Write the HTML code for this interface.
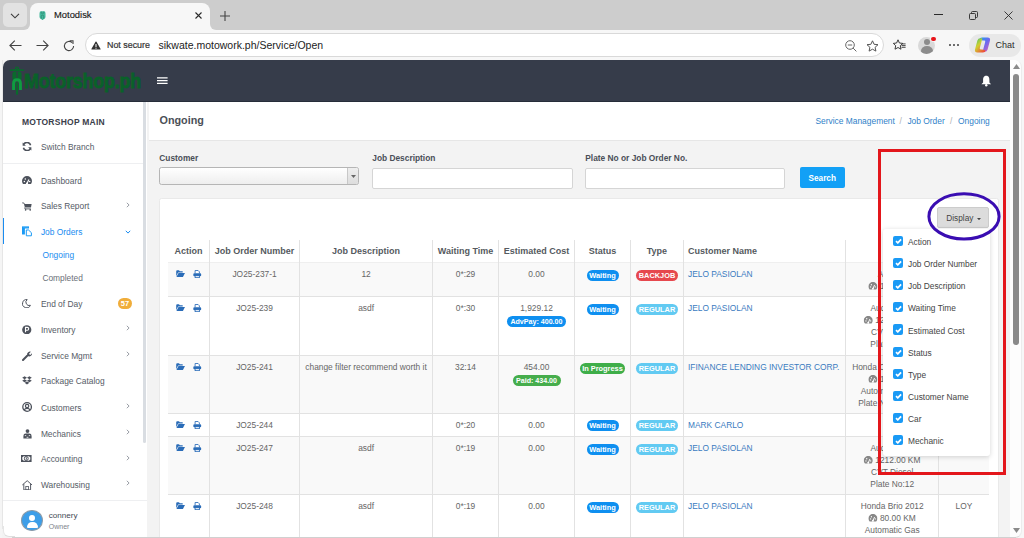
<!DOCTYPE html>
<html><head><meta charset="utf-8">
<style>
*{box-sizing:border-box;margin:0;padding:0}
html,body{width:1024px;height:538px;overflow:hidden;background:#cdcdcd;font-family:"Liberation Sans",sans-serif;position:relative}
.a{position:absolute}
#tabbar{left:0;top:0;width:1024px;height:30px;background:#cdcdcd}
#toolbar{left:0;top:30px;width:1024px;height:30px;background:#f7f7f7}
.t{position:absolute;white-space:nowrap;line-height:1}
.car{display:inline-block;width:8px;height:7px;vertical-align:-0.5px;background:radial-gradient(circle at 50% 100%,#666 0 4px,transparent 4.2px)}
</style></head>
<body>
<div id="tabbar" class="a">
  <div class="a" style="left:22px;top:22px;width:196px;height:8px;background:#f7f7f7"></div>
  <div class="a" style="left:20px;top:20px;width:10px;height:10px;background:#cdcdcd;border-bottom-right-radius:6px"></div>
  <div class="a" style="left:210px;top:20px;width:10px;height:10px;background:#cdcdcd;border-bottom-left-radius:6px"></div>
  <div class="a" style="left:3px;top:3px;width:24px;height:24px;background:#e2e2e2;border-radius:5px"></div>
  <svg class="a" style="left:10px;top:12.5px" width="10" height="6" viewBox="0 0 10 6"><path d="M1 0.8 L5 4.8 L9 0.8" stroke="#3a3a3a" stroke-width="1.1" fill="none"/></svg>
  <div class="a" style="left:30px;top:3px;width:180px;height:30px;background:#f7f7f7;border-radius:8px 8px 0 0"></div>
  <svg class="a" style="left:38.5px;top:10.5px" width="7" height="9.5" viewBox="0 0 7 9.5"><path d="M0.5 2.5 Q0.5 0.3 2 0.3 H5 Q6.5 0.3 6.5 2.5 V6 Q6.5 8 4.3 8.2 V9.3 H2.7 V8.2 Q0.5 8 0.5 6Z" fill="#45b89c"/><path d="M2.2 0.6 V2.2 H4.8 V0.6" stroke="#2e8a72" stroke-width="0.7" fill="none"/><path d="M2.3 7.6 V5.3 A1.2 1.2 0 0 1 4.7 5.3 V7.6" stroke="#2e8a72" stroke-width="0.8" fill="none"/></svg>
  <div class="t" style="left:54px;top:10.4px;font-size:9.4px;color:#1a1a1a;-webkit-text-stroke:0.15px #1a1a1a">Motodisk</div>
  <svg class="a" style="left:195px;top:12.3px" width="7" height="7" viewBox="0 0 7 7"><path d="M0.5 0.5 L6.5 6.5 M6.5 0.5 L0.5 6.5" stroke="#2a2a2a" stroke-width="1.1"/></svg>
  <svg class="a" style="left:220px;top:10.5px" width="10" height="10" viewBox="0 0 10 10"><path d="M5 0 V10 M0 5 H10" stroke="#444" stroke-width="1.1"/></svg>
  <div class="a" style="left:934px;top:14px;width:8.5px;height:1px;background:#2a2a2a"></div>
  <svg class="a" style="left:968.5px;top:10.5px" width="9" height="9" viewBox="0 0 9 9"><rect x="0.5" y="2.5" width="6" height="6" rx="1" fill="none" stroke="#2a2a2a" stroke-width="0.9"/><path d="M2.5 2.5 V1.5 a1 1 0 0 1 1 -1 H7.5 a1 1 0 0 1 1 1 V5.5 a1 1 0 0 1 -1 1 H6.5" fill="none" stroke="#2a2a2a" stroke-width="0.9"/></svg>
  <svg class="a" style="left:1003.5px;top:10.5px" width="9" height="9" viewBox="0 0 9 9"><path d="M0.5 0.5 L8.5 8.5 M8.5 0.5 L0.5 8.5" stroke="#2a2a2a" stroke-width="0.9"/></svg>
</div>
<div id="toolbar" class="a">
  <svg class="a" style="left:8.5px;top:10px" width="13" height="11" viewBox="0 0 13 11"><path d="M12.5 5.5 H1 M5.8 0.6 L0.9 5.5 L5.8 10.4" stroke="#444" stroke-width="1.1" fill="none"/></svg>
  <svg class="a" style="left:35.5px;top:10px" width="13" height="11" viewBox="0 0 13 11"><path d="M0.5 5.5 H12 M7.2 0.6 L12.1 5.5 L7.2 10.4" stroke="#444" stroke-width="1.1" fill="none"/></svg>
  <svg class="a" style="left:63px;top:9.5px" width="12" height="12" viewBox="0 0 12 12"><path d="M10.6 6 A4.6 4.6 0 1 1 9.2 2.7" stroke="#444" stroke-width="1.1" fill="none"/><path d="M6.8 0.8 H10 V4" stroke="#444" stroke-width="1.1" fill="none"/></svg>
  <div class="a" style="left:84.6px;top:3px;width:799.4px;height:23.5px;background:#fff;border:1px solid #d9d9d9;border-radius:12px"></div>
  <svg class="a" style="left:91px;top:11px" width="10" height="9" viewBox="0 0 10 9"><path d="M5 0.4 Q5.3 0.4 5.5 0.8 L9.6 8 Q9.8 8.6 9.2 8.6 H0.8 Q0.2 8.6 0.4 8 L4.5 0.8 Q4.7 0.4 5 0.4Z" fill="#333"/><rect x="4.5" y="3" width="1" height="3" fill="#fff"/><rect x="4.5" y="6.7" width="1" height="1" fill="#fff"/></svg>
  <div class="t" style="left:107px;top:10.6px;font-size:8.9px;color:#333;-webkit-text-stroke:0.2px #333">Not secure</div>
  <div class="t" style="left:158.5px;top:10px;font-size:10.5px;color:#222">sikwate.motowork.ph/Service/Open</div>
  <svg class="a" style="left:845px;top:10px" width="12" height="12" viewBox="0 0 12 12"><circle cx="5" cy="5" r="4.3" stroke="#666" stroke-width="1" fill="none"/><path d="M2.8 5 H7.2 M8.1 8.1 L11.4 11.4" stroke="#666" stroke-width="1"/></svg>
  <svg class="a" style="left:866px;top:9.5px" width="13" height="12" viewBox="0 0 13 12"><path d="M6.5 0.8 L8.1 4.3 L12 4.7 L9.1 7.3 L9.9 11.1 L6.5 9.2 L3.1 11.1 L3.9 7.3 L1 4.7 L4.9 4.3 Z" stroke="#555" stroke-width="1" fill="none" stroke-linejoin="round"/></svg>
  <svg class="a" style="left:893px;top:9px" width="13" height="12" viewBox="0 0 13 12"><path d="M5 0.8 L6.4 4 L9.8 4.4 L7.3 6.7 L8 10.2 L5 8.5 L2 10.2 L2.7 6.7 L0.3 4.4 L3.6 4 Z" stroke="#333" stroke-width="0.95" fill="#f7f7f7" stroke-linejoin="round"/><path d="M8.6 6.6 H12.6 M8.6 8.3 H12.6 M9 4.9 H12.6" stroke="#333" stroke-width="0.9"/></svg>
  <div class="a" style="left:918px;top:6.6px;width:17.2px;height:17.2px;border-radius:50%;background:#d9d9d9;overflow:hidden">
    <div class="a" style="left:5.6px;top:2.3px;width:6px;height:6px;border-radius:50%;background:#8c8c8c"></div>
    <div class="a" style="left:2.6px;top:9.8px;width:12px;height:10px;border-radius:50%;background:#8c8c8c"></div>
  </div>
  <div class="a" style="left:931px;top:6.5px;width:4.8px;height:4.8px;border-radius:50%;background:#e8141a;box-shadow:0 0 0 0.8px #f7f7f7"></div>
  <svg class="a" style="left:948.5px;top:14px" width="10" height="2" viewBox="0 0 10 2"><circle cx="1" cy="1" r="0.95" fill="#333"/><circle cx="5" cy="1" r="0.95" fill="#333"/><circle cx="9" cy="1" r="0.95" fill="#333"/></svg>
  <div class="a" style="left:969px;top:4px;width:52px;height:22.6px;background:#e8e8e8;border-radius:11.3px"></div>
  <svg class="a" style="left:973.5px;top:7.2px" width="17" height="16" viewBox="0 0 17 16"><defs><linearGradient id="g1" x1="0" y1="0" x2="1" y2="1"><stop offset="0" stop-color="#1aa0f0"/><stop offset="0.5" stop-color="#6a6af0"/><stop offset="1" stop-color="#e860b0"/></linearGradient><linearGradient id="g2" x1="0" y1="0" x2="0.8" y2="1"><stop offset="0" stop-color="#30c070"/><stop offset="0.45" stop-color="#d0d030"/><stop offset="1" stop-color="#f04a3a"/></linearGradient></defs><path d="M5.2 2.6 Q5.8 0.6 8 0.6 H13.6 Q16.6 0.6 16 3.6 L13.6 12.4 Q13 14.8 10.6 14.8 H8.6 L11.2 5 Q11.6 3.6 10.2 3.6 H8.6Z" fill="url(#g1)"/><path d="M11.8 13.4 Q11.2 15.4 9 15.4 H3.4 Q0.4 15.4 1 12.4 L3.4 3.6 Q4 1.2 6.4 1.2 H8.4 L5.8 11 Q5.4 12.4 6.8 12.4 H8.4Z" fill="url(#g2)"/></svg>
  <div class="t" style="left:995.6px;top:10.6px;font-size:9px;color:#2a2a2a">Chat</div>
</div>

<div class="a" style="left:3px;top:60px;width:1007px;height:478px;background:#f3f3f3"></div>
<div class="a" style="left:3px;top:60px;width:1007.5px;height:42px;background:#363c4a;border-top-left-radius:7px;border-bottom:1px solid #262d39"></div>
<svg class="a" style="left:6px;top:64px" width="22" height="32" viewBox="0 0 22 32"><path d="M3.8 6.2 Q11 4.6 18.2 6.2 Q11 7.4 3.8 6.2Z" fill="#0a6a2c" stroke="#0a6a2c" stroke-width="1"/><circle cx="11" cy="4.6" r="1.5" fill="none" stroke="#0a6a2c" stroke-width="1.1"/><path d="M6.4 15.5 V10 Q6.4 7.6 8.8 7.6 H10.4 V15.5Z" fill="#0a6a2c"/><path d="M15.6 15.5 V10 Q15.6 7.6 13.2 7.6 H11.6 V15.5Z" fill="#0a6a2c"/><path d="M7.6 26 V19.5 Q7.6 15.8 11 15.8 Q14.4 15.8 14.4 19.5 V26" fill="none" stroke="#0e9c40" stroke-width="3"/><path d="M11 19 V29.8" stroke="#0a6a2c" stroke-width="2.2" stroke-linecap="round"/></svg>
<div class="t" style="left:23.7px;top:71px;font-size:20px;font-weight:bold;color:#0a6129;-webkit-text-stroke:0.8px #0a6129;transform:scaleX(0.893);transform-origin:left top;letter-spacing:-0.2px">Motorshop.ph</div>
<svg class="a" style="left:157.1px;top:77px" width="10.6" height="8" viewBox="0 0 10.6 8"><path d="M0 0.9 H10.6 M0 3.65 H10.6 M0 6.4 H10.6" stroke="#fff" stroke-width="1.2"/></svg>
<svg class="a" style="left:981px;top:75px" width="10.5" height="11.5" viewBox="0 0 10.5 11.5"><path d="M5.25 0.8 C2.6 0.8 2.1 3 2.1 5.2 V7.4 L0.4 9.3 H10.1 L8.4 7.4 V5.2 C8.4 3 7.9 0.8 5.25 0.8Z" fill="#fff"/><circle cx="5.25" cy="10.2" r="1.2" fill="#fff"/></svg>
<div class="a" style="left:3px;top:101.5px;width:144px;height:437px;background:#fff"></div>
<div class="a" style="left:143.2px;top:101.5px;width:3px;height:341.5px;background:#d9dde2;border-radius:0 0 1.5px 1.5px"></div>
<div class="t" style="left:22px;top:118.4px;font-size:8.5px;font-weight:bold;color:#3b404b;letter-spacing:0.25px">MOTORSHOP MAIN</div>
<div class="a" style="left:3px;top:163px;width:140px;height:1px;background:#eeeff1"></div>
<div class="a" style="left:3px;top:499.6px;width:144px;height:1px;background:#eeeff1"></div>
<div class="t" style="left:40.9px;top:142.72px;font-size:8.4px;color:#555b66">Switch Branch</div>
<div class="t" style="left:40.9px;top:176.72px;font-size:8.4px;color:#555b66">Dashboard</div>
<div class="t" style="left:40.9px;top:202.42px;font-size:8.4px;color:#555b66">Sales Report</div>
<div class="t" style="left:40.9px;top:227.72px;font-size:8.4px;color:#1a8cf0">Job Orders</div>
<div class="t" style="left:40.9px;top:299.52px;font-size:8.4px;color:#555b66">End of Day</div>
<div class="t" style="left:40.9px;top:325.52px;font-size:8.4px;color:#555b66">Inventory</div>
<div class="t" style="left:40.9px;top:351.72px;font-size:8.4px;color:#555b66">Service Mgmt</div>
<div class="t" style="left:40.9px;top:377.32px;font-size:8.4px;color:#555b66">Package Catalog</div>
<div class="t" style="left:40.9px;top:403.82px;font-size:8.4px;color:#555b66">Customers</div>
<div class="t" style="left:40.9px;top:429.52px;font-size:8.4px;color:#555b66">Mechanics</div>
<div class="t" style="left:40.9px;top:455.32px;font-size:8.4px;color:#555b66">Accounting</div>
<div class="t" style="left:40.9px;top:481.12px;font-size:8.4px;color:#555b66">Warehousing</div>
<div class="t" style="left:42.4px;top:251.32px;font-size:8.4px;color:#1a8cf0">Ongoing</div>
<div class="t" style="left:42.4px;top:273.92px;font-size:8.4px;color:#6a6f78">Completed</div>
<div class="a" style="left:2.8px;top:218.3px;width:1.2px;height:26.2px;background:#1a8cf0"></div>
<svg class="a" style="left:125.5px;top:201.5px" width="4" height="6" viewBox="0 0 4 6"><path d="M0.8 0.8 L3.1 3 L0.8 5.2" stroke="#9a9ea6" stroke-width="1" fill="none"/></svg>
<svg class="a" style="left:125.5px;top:324.8px" width="4" height="6" viewBox="0 0 4 6"><path d="M0.8 0.8 L3.1 3 L0.8 5.2" stroke="#9a9ea6" stroke-width="1" fill="none"/></svg>
<svg class="a" style="left:125.5px;top:351.0px" width="4" height="6" viewBox="0 0 4 6"><path d="M0.8 0.8 L3.1 3 L0.8 5.2" stroke="#9a9ea6" stroke-width="1" fill="none"/></svg>
<svg class="a" style="left:125.5px;top:403.0px" width="4" height="6" viewBox="0 0 4 6"><path d="M0.8 0.8 L3.1 3 L0.8 5.2" stroke="#9a9ea6" stroke-width="1" fill="none"/></svg>
<svg class="a" style="left:125.5px;top:428.8px" width="4" height="6" viewBox="0 0 4 6"><path d="M0.8 0.8 L3.1 3 L0.8 5.2" stroke="#9a9ea6" stroke-width="1" fill="none"/></svg>
<svg class="a" style="left:125.5px;top:454.6px" width="4" height="6" viewBox="0 0 4 6"><path d="M0.8 0.8 L3.1 3 L0.8 5.2" stroke="#9a9ea6" stroke-width="1" fill="none"/></svg>
<svg class="a" style="left:125.5px;top:480.4px" width="4" height="6" viewBox="0 0 4 6"><path d="M0.8 0.8 L3.1 3 L0.8 5.2" stroke="#9a9ea6" stroke-width="1" fill="none"/></svg>
<svg class="a" style="left:124.5px;top:229.8px" width="6" height="4" viewBox="0 0 6 4"><path d="M0.8 0.8 L3 3.1 L5.2 0.8" stroke="#1a8cf0" stroke-width="1" fill="none"/></svg>
<div class="a" style="left:117.7px;top:298.2px;width:14.7px;height:11px;border-radius:6px;background:#f0ad3a;color:#fff;font-size:7.5px;font-weight:bold;line-height:11px;text-align:center">57</div>
<svg class="a" style="left:22px;top:142px" width="10" height="9" viewBox="0 0 10 9"><path d="M8.6 3.2 A3.8 3.8 0 0 0 1.6 2.4" stroke="#4d525c" stroke-width="1.5" fill="none"/><path d="M0.6 0.5 V3.8 H3.9Z" fill="#4d525c"/><path d="M1.4 5.8 A3.8 3.8 0 0 0 8.4 6.6" stroke="#4d525c" stroke-width="1.5" fill="none"/><path d="M9.4 8.5 V5.2 H6.1Z" fill="#4d525c"/></svg>
<svg class="a" style="left:22px;top:175.6px" width="10" height="8.5" viewBox="0 0 10 8.5"><path d="M1.3 8.4 A5 5 0 1 1 8.7 8.4 Z" fill="#4d525c"/><path d="M5 7.6 L6.9 3.4" stroke="#fff" stroke-width="1.1"/><circle cx="5" cy="7.6" r="1.1" fill="#fff"/><circle cx="2.4" cy="5.6" r="0.75" fill="#fff"/><circle cx="3.3" cy="3.1" r="0.75" fill="#fff"/><circle cx="7.7" cy="5.6" r="0.75" fill="#fff"/></svg>
<svg class="a" style="left:22px;top:201.5px" width="10" height="9" viewBox="0 0 10 9"><path d="M0.3 0.9 H1.6 L2.4 2" stroke="#4d525c" stroke-width="1" fill="none"/><path d="M2 2 H9.6 L9 5.6 H2.9Z" fill="#4d525c"/><path d="M2.6 5.6 L3 6.9 H8.8" stroke="#4d525c" stroke-width="0.9" fill="none"/><circle cx="3.6" cy="7.9" r="0.8" fill="#4d525c"/><circle cx="8.2" cy="7.9" r="0.8" fill="#4d525c"/></svg>
<svg class="a" style="left:21.5px;top:226px" width="11" height="11" viewBox="0 0 11 11"><rect x="0" y="0.3" width="7" height="8.3" rx="0.6" fill="#1a9af5"/><rect x="1" y="0.3" width="5" height="0.9" fill="#7cc8fa"/><path d="M3.5 3.2 H6.8 L10.2 6.4 V10.6 H3.5Z" fill="#fff" stroke="#fff" stroke-width="1.2"/><path d="M4.3 4 H6.5 L9.4 6.7 V9.8 H4.3Z" fill="#fff" stroke="#1a9af5" stroke-width="1"/></svg>
<svg class="a" style="left:22px;top:298.7px" width="9" height="9" viewBox="0 0 9 9"><path d="M5.2 0.6 A4.1 4.1 0 1 0 8.4 6.3 A3.3 3.3 0 0 1 5.2 0.6Z" stroke="#4d525c" stroke-width="1" fill="none"/></svg>
<svg class="a" style="left:22px;top:324.5px" width="9.5" height="9.5" viewBox="0 0 9.5 9.5"><circle cx="4.75" cy="4.75" r="4.6" fill="#4d525c"/><path d="M3.5 7.2 V2.4 H5.3 A1.4 1.4 0 0 1 5.3 5.2 H3.5" stroke="#fff" stroke-width="1.1" fill="none"/></svg>
<svg class="a" style="left:22px;top:350.5px" width="10" height="10" viewBox="0 0 10 10"><path d="M1 9 L5.2 4.8" stroke="#4d525c" stroke-width="2" stroke-linecap="round"/><path d="M5 3.6 A2.9 2.9 0 0 1 8.9 0.8 L7 2.7 L7.5 3.5 L8.3 4 L10 2.2 A2.9 2.9 0 0 1 6.3 5.3Z" fill="#4d525c"/></svg>
<svg class="a" style="left:22px;top:376px" width="10" height="9" viewBox="0 0 10 9"><path d="M2.6 0.3 L5 1.8 L2.6 3.3 L0.2 1.8Z M7.4 0.3 L9.8 1.8 L7.4 3.3 L5 1.8Z M2.6 3.3 L5 4.8 L2.6 6.3 L0.2 4.8Z M7.4 3.3 L9.8 4.8 L7.4 6.3 L5 4.8Z M2.6 6.8 L5 5.4 L7.4 6.8 L5 8.4Z" fill="#4d525c"/></svg>
<svg class="a" style="left:22px;top:402px" width="10.2" height="10" viewBox="0 0 10.2 10"><circle cx="5.1" cy="5" r="4.3" stroke="#4d525c" stroke-width="1.3" fill="none"/><circle cx="5.1" cy="4" r="1.7" stroke="#4d525c" stroke-width="1.2" fill="none"/><path d="M2.2 8.3 Q2.8 6.4 5.1 6.4 Q7.4 6.4 8 8.3" stroke="#4d525c" stroke-width="1.2" fill="none"/></svg>
<svg class="a" style="left:22.5px;top:428.6px" width="9" height="10" viewBox="0 0 9 10"><circle cx="4.5" cy="2.1" r="1.9" fill="#4d525c"/><path d="M0.4 9.6 V7 Q0.4 4.6 2.8 4.6 H6.2 Q8.6 4.6 8.6 7 V9.6Z" fill="#4d525c"/><path d="M1.8 6.6 H3.2 M5.8 6.6 H7.2 M3.6 8.3 H5.4" stroke="#fff" stroke-width="0.8"/></svg>
<svg class="a" style="left:21.3px;top:455.2px" width="10.6" height="7" viewBox="0 0 10.6 7"><rect x="0.65" y="0.65" width="9.3" height="5.7" stroke="#4d525c" stroke-width="1.3" fill="none"/><path d="M0.6 0.6 H2.6 Q2.6 2.4 0.6 2.4Z M10 0.6 H8 Q8 2.4 10 2.4Z M0.6 6.4 H2.6 Q2.6 4.6 0.6 4.6Z M10 6.4 H8 Q8 4.6 10 4.6Z" fill="#4d525c"/><ellipse cx="5.3" cy="3.5" rx="1.9" ry="2.1" stroke="#4d525c" stroke-width="1" fill="none"/><rect x="4.9" y="2.3" width="0.9" height="2.4" fill="#4d525c"/></svg>
<svg class="a" style="left:21.8px;top:479.8px" width="10.4" height="10.4" viewBox="0 0 10.4 10.4"><path d="M0.3 5 L5.2 0.7 L10.1 5" stroke="#4d525c" stroke-width="0.95" fill="none"/><path d="M1.8 3.9 V9.9 H8.6 V3.9" stroke="#4d525c" stroke-width="0.95" fill="none"/><rect x="3.8" y="6.4" width="2.8" height="3.5" stroke="#4d525c" stroke-width="0.8" fill="none"/></svg>
<div class="a" style="left:21.2px;top:510.3px;width:21.5px;height:21.2px;border-radius:50%;background:#3d9ee8;border:0.6px solid #8a9aa8;overflow:hidden"><div class="a" style="left:7.3px;top:4.2px;width:5.8px;height:5.8px;border-radius:50%;background:#fff"></div><div class="a" style="left:4.8px;top:10.6px;width:10.6px;height:5.8px;border-radius:5.3px 5.3px 1px 1px;background:#fff"></div></div>
<div class="t" style="left:48.8px;top:511.89px;font-size:8.1px;color:#444a55">connery</div>
<div class="t" style="left:48.8px;top:522.67px;font-size:7px;color:#80858c">Owner</div>
<div class="a" style="left:149px;top:101.5px;width:861px;height:39.5px;background:#fff;border-bottom:1px solid #e6e6e6"></div>
<div class="t" style="left:159.5px;top:114.8px;font-size:10.8px;font-weight:bold;color:#4b5057">Ongoing</div>
<div class="t" style="left:815.4px;top:117.3px;font-size:8.42px;color:#2f7fc8">Service Management</div>
<div class="t" style="left:899.5px;top:117.3px;font-size:8.42px;color:#b0b0b0">/</div>
<div class="t" style="left:907.4px;top:117.3px;font-size:8.42px;color:#2f7fc8">Job Order</div>
<div class="t" style="left:950px;top:117.3px;font-size:8.42px;color:#b0b0b0">/</div>
<div class="t" style="left:958px;top:117.3px;font-size:8.42px;color:#2f7fc8">Ongoing</div>
<div class="t" style="left:159.3px;top:154.4px;font-size:8.35px;font-weight:bold;color:#4a4f58">Customer</div>
<div class="t" style="left:372.3px;top:154.4px;font-size:8.35px;font-weight:bold;color:#4a4f58">Job Description</div>
<div class="t" style="left:585.3px;top:154.4px;font-size:8.35px;font-weight:bold;color:#4a4f58">Plate No or Job Order No.</div>
<div class="a" style="left:159.3px;top:167.3px;width:200.2px;height:17.9px;border:1px solid #b5b5b5;border-radius:2.5px;background:linear-gradient(#fff,#eee)"></div>
<div class="a" style="left:347.3px;top:168.3px;width:11.2px;height:15.9px;border-left:1px solid #c8c8c8;background:linear-gradient(#eee,#ddd);border-radius:0 2px 2px 0"></div>
<svg class="a" style="left:350.5px;top:174.5px" width="5" height="3" viewBox="0 0 5 3"><path d="M0 0 H5 L2.5 3Z" fill="#666"/></svg>
<div class="a" style="left:372.3px;top:167.5px;width:200.5px;height:21.2px;border:1px solid #d5d5d5;border-radius:2px;background:#fff"></div>
<div class="a" style="left:585.3px;top:167.5px;width:199.9px;height:21.2px;border:1px solid #d5d5d5;border-radius:2px;background:#fff"></div>
<div class="a" style="left:799.8px;top:167.4px;width:44.9px;height:20.8px;border-radius:2px;background:#12a0f6;color:#fff;font-size:8.2px;font-weight:bold;line-height:23px;text-align:center">Search</div>
<div class="a" style="left:159px;top:198px;width:839.5px;height:345px;background:#fff;border:1px solid #e9e9e9;border-radius:2.5px"></div>
<div class="a" style="left:167.6px;top:262.3px;width:821.4px;height:34.1px;background:#f9f9f9"></div>
<div class="a" style="left:167.6px;top:296.4px;width:821.4px;height:58.9px;background:#fff"></div>
<div class="a" style="left:167.6px;top:355.3px;width:821.4px;height:58.4px;background:#f9f9f9"></div>
<div class="a" style="left:167.6px;top:413.7px;width:821.4px;height:22.7px;background:#fff"></div>
<div class="a" style="left:167.6px;top:436.4px;width:821.4px;height:58.0px;background:#f9f9f9"></div>
<div class="a" style="left:167.6px;top:494.4px;width:821.4px;height:65.6px;background:#fff"></div>
<div class="a" style="left:167.6px;top:295.9px;width:821.4px;height:1px;background:#e2e2e2"></div>
<div class="a" style="left:167.6px;top:354.8px;width:821.4px;height:1px;background:#e2e2e2"></div>
<div class="a" style="left:167.6px;top:413.2px;width:821.4px;height:1px;background:#e2e2e2"></div>
<div class="a" style="left:167.6px;top:435.9px;width:821.4px;height:1px;background:#e2e2e2"></div>
<div class="a" style="left:167.6px;top:493.9px;width:821.4px;height:1px;background:#e2e2e2"></div>
<div class="a" style="left:167.6px;top:261.8px;width:821.4px;height:1px;background:#efefef"></div>
<div class="a" style="left:209.0px;top:240px;width:1px;height:300px;background:#e2e2e2"></div>
<div class="a" style="left:299.1px;top:240px;width:1px;height:300px;background:#e2e2e2"></div>
<div class="a" style="left:432.0px;top:240px;width:1px;height:300px;background:#e2e2e2"></div>
<div class="a" style="left:498.0px;top:240px;width:1px;height:300px;background:#e2e2e2"></div>
<div class="a" style="left:574.0px;top:240px;width:1px;height:300px;background:#e2e2e2"></div>
<div class="a" style="left:630.1px;top:240px;width:1px;height:300px;background:#e2e2e2"></div>
<div class="a" style="left:682.8px;top:240px;width:1px;height:300px;background:#e2e2e2"></div>
<div class="a" style="left:845.1px;top:240px;width:1px;height:300px;background:#e2e2e2"></div>
<div class="a" style="left:938.3px;top:240px;width:1px;height:300px;background:#e2e2e2"></div>
<div class="t" style="left:188.55px;top:246.89px;font-size:9px;color:#555a60;font-weight:bold;transform:translateX(-50%);">Action</div>
<div class="t" style="left:254.55px;top:246.89px;font-size:9px;color:#555a60;font-weight:bold;transform:translateX(-50%);">Job Order Number</div>
<div class="t" style="left:366.05px;top:246.89px;font-size:9px;color:#555a60;font-weight:bold;transform:translateX(-50%);">Job Description</div>
<div class="t" style="left:465.5px;top:246.89px;font-size:9px;color:#555a60;font-weight:bold;transform:translateX(-50%);">Waiting Time</div>
<div class="t" style="left:536.5px;top:246.89px;font-size:9px;color:#555a60;font-weight:bold;transform:translateX(-50%);">Estimated Cost</div>
<div class="t" style="left:602.55px;top:246.89px;font-size:9px;color:#555a60;font-weight:bold;transform:translateX(-50%);">Status</div>
<div class="t" style="left:656.95px;top:246.89px;font-size:9px;color:#555a60;font-weight:bold;transform:translateX(-50%);">Type</div>
<div class="t" style="left:688px;top:246.89px;font-size:9px;color:#555a60;font-weight:bold;">Customer Name</div>
<div class="t" style="left:892.2px;top:246.89px;font-size:9px;color:#555a60;font-weight:bold;transform:translateX(-50%);">Car</div>
<div class="t" style="left:963.9px;top:246.89px;font-size:9px;color:#555a60;font-weight:bold;transform:translateX(-50%);">Mechanic</div>
<svg class="a" style="left:176px;top:270.3px" width="9" height="7.2" viewBox="0 0 9 7.2"><path d="M0.2 1.3 Q0.2 0.3 1.2 0.3 H2.9 L3.9 1.3 H6.7 V2.5 H2.1 L0.2 6.2Z" fill="#2a6cb8"/><path d="M2.5 3 H9 L6.9 6.9 H0.4Z" fill="#2a6cb8"/></svg>
<svg class="a" style="left:193px;top:270.1px" width="8.5" height="8.2" viewBox="0 0 8.5 8.2"><path d="M2.1 3.4 V0.5 H5.1 L6.4 1.8 V3.4" stroke="#2a6cb8" stroke-width="0.85" fill="#fff"/><rect x="0.3" y="3.3" width="7.9" height="3" rx="1.1" fill="#2a6cb8"/><rect x="2.1" y="5.5" width="4.3" height="2.2" fill="#dde7f3" stroke="#2a6cb8" stroke-width="0.85"/></svg>
<div class="t" style="left:254.55px;top:270.22px;font-size:8.4px;color:#666;transform:translateX(-50%);">JO25-237-1</div>
<div class="t" style="left:366.05px;top:270.22px;font-size:8.4px;color:#666;transform:translateX(-50%);">12</div>
<div class="t" style="left:465.5px;top:270.22px;font-size:8.4px;color:#666;transform:translateX(-50%);">0*:29</div>
<div class="t" style="left:536.5px;top:270.22px;font-size:8.4px;color:#666;transform:translateX(-50%);">0.00</div>
<div class="a" style="left:586.5px;top:269.5px;width:32px;height:11.4px;border-radius:6px;background:#0e8ff0;color:#fff;font-size:7.4px;font-weight:bold;line-height:12.2px;text-align:center;white-space:nowrap">Waiting</div>
<div class="a" style="left:636.2px;top:269.5px;width:41.6px;height:11.4px;border-radius:6px;background:#e6484e;color:#fff;font-size:7.4px;font-weight:bold;line-height:12.2px;text-align:center;white-space:nowrap">BACKJOB</div>
<div class="t" style="left:688px;top:270.22px;font-size:8.4px;color:#3a7bc0;">JELO PASIOLAN</div>
<div class="t" style="left:892.2px;top:270.22px;font-size:8.4px;color:#666;transform:translateX(-50%);">Audi A4</div>
<div class="t" style="left:892.2px;top:282.27px;font-size:8.4px;color:#666;transform:translateX(-50%);"><svg width="9" height="7.5" viewBox="0 0 10 8.5" style="vertical-align:-0.5px"><path d="M1.3 8.4 A5 5 0 1 1 8.7 8.4 Z" fill="#888"/><path d="M5 7.6 L6.9 3.4" stroke="#fff" stroke-width="1.1"/><circle cx="5" cy="7.6" r="1.1" fill="#fff"/><circle cx="2.4" cy="5.6" r="0.75" fill="#fff"/><circle cx="3.3" cy="3.1" r="0.75" fill="#fff"/><circle cx="7.7" cy="5.6" r="0.75" fill="#fff"/></svg> 12.00 KM</div>
<svg class="a" style="left:176px;top:304.4px" width="9" height="7.2" viewBox="0 0 9 7.2"><path d="M0.2 1.3 Q0.2 0.3 1.2 0.3 H2.9 L3.9 1.3 H6.7 V2.5 H2.1 L0.2 6.2Z" fill="#2a6cb8"/><path d="M2.5 3 H9 L6.9 6.9 H0.4Z" fill="#2a6cb8"/></svg>
<svg class="a" style="left:193px;top:304.2px" width="8.5" height="8.2" viewBox="0 0 8.5 8.2"><path d="M2.1 3.4 V0.5 H5.1 L6.4 1.8 V3.4" stroke="#2a6cb8" stroke-width="0.85" fill="#fff"/><rect x="0.3" y="3.3" width="7.9" height="3" rx="1.1" fill="#2a6cb8"/><rect x="2.1" y="5.5" width="4.3" height="2.2" fill="#dde7f3" stroke="#2a6cb8" stroke-width="0.85"/></svg>
<div class="t" style="left:254.55px;top:304.32px;font-size:8.4px;color:#666;transform:translateX(-50%);">JO25-239</div>
<div class="t" style="left:366.05px;top:304.32px;font-size:8.4px;color:#666;transform:translateX(-50%);">asdf</div>
<div class="t" style="left:465.5px;top:304.32px;font-size:8.4px;color:#666;transform:translateX(-50%);">0*:30</div>
<div class="t" style="left:536.5px;top:304.32px;font-size:8.4px;color:#666;transform:translateX(-50%);">1,929.12</div>
<div class="a" style="left:507.2px;top:315.6px;width:58.5px;height:11.4px;border-radius:6px;background:#0e8ff0;color:#fff;font-size:7.1px;font-weight:bold;line-height:12.2px;text-align:center;white-space:nowrap">AdvPay: 400.00</div>
<div class="a" style="left:586.5px;top:303.6px;width:32px;height:11.4px;border-radius:6px;background:#0e8ff0;color:#fff;font-size:7.4px;font-weight:bold;line-height:12.2px;text-align:center;white-space:nowrap">Waiting</div>
<div class="a" style="left:636.2px;top:303.6px;width:41.6px;height:11.4px;border-radius:6px;background:#62caf2;color:#fff;font-size:7.4px;font-weight:bold;line-height:12.2px;text-align:center;white-space:nowrap">REGULAR</div>
<div class="t" style="left:688px;top:304.32px;font-size:8.4px;color:#3a7bc0;">JELO PASIOLAN</div>
<div class="t" style="left:892.2px;top:304.32px;font-size:8.4px;color:#666;transform:translateX(-50%);">Audi Sedan</div>
<div class="t" style="left:892.2px;top:316.37px;font-size:8.4px;color:#666;transform:translateX(-50%);"><svg width="9" height="7.5" viewBox="0 0 10 8.5" style="vertical-align:-0.5px"><path d="M1.3 8.4 A5 5 0 1 1 8.7 8.4 Z" fill="#888"/><path d="M5 7.6 L6.9 3.4" stroke="#fff" stroke-width="1.1"/><circle cx="5" cy="7.6" r="1.1" fill="#fff"/><circle cx="2.4" cy="5.6" r="0.75" fill="#fff"/><circle cx="3.3" cy="3.1" r="0.75" fill="#fff"/><circle cx="7.7" cy="5.6" r="0.75" fill="#fff"/></svg> 1212.00 KM</div>
<div class="t" style="left:892.2px;top:328.42px;font-size:8.4px;color:#666;transform:translateX(-50%);">CVT Diesel</div>
<div class="t" style="left:892.2px;top:340.47px;font-size:8.4px;color:#666;transform:translateX(-50%);">Plate No:12</div>
<svg class="a" style="left:176px;top:363.3px" width="9" height="7.2" viewBox="0 0 9 7.2"><path d="M0.2 1.3 Q0.2 0.3 1.2 0.3 H2.9 L3.9 1.3 H6.7 V2.5 H2.1 L0.2 6.2Z" fill="#2a6cb8"/><path d="M2.5 3 H9 L6.9 6.9 H0.4Z" fill="#2a6cb8"/></svg>
<svg class="a" style="left:193px;top:363.1px" width="8.5" height="8.2" viewBox="0 0 8.5 8.2"><path d="M2.1 3.4 V0.5 H5.1 L6.4 1.8 V3.4" stroke="#2a6cb8" stroke-width="0.85" fill="#fff"/><rect x="0.3" y="3.3" width="7.9" height="3" rx="1.1" fill="#2a6cb8"/><rect x="2.1" y="5.5" width="4.3" height="2.2" fill="#dde7f3" stroke="#2a6cb8" stroke-width="0.85"/></svg>
<div class="t" style="left:254.55px;top:363.22px;font-size:8.4px;color:#666;transform:translateX(-50%);">JO25-241</div>
<div class="t" style="left:366.05px;top:363.22px;font-size:8.4px;color:#666;transform:translateX(-50%);">change filter recommend worth it</div>
<div class="t" style="left:465.5px;top:363.22px;font-size:8.4px;color:#666;transform:translateX(-50%);">32:14</div>
<div class="t" style="left:536.5px;top:363.22px;font-size:8.4px;color:#666;transform:translateX(-50%);">454.00</div>
<div class="a" style="left:512.5px;top:374.5px;width:48px;height:11.4px;border-radius:6px;background:#46ad4c;color:#fff;font-size:7.1px;font-weight:bold;line-height:12.2px;text-align:center;white-space:nowrap">Paid: 434.00</div>
<div class="a" style="left:579.8px;top:362.5px;width:45.4px;height:11.4px;border-radius:6px;background:#3fae49;color:#fff;font-size:7.4px;font-weight:bold;line-height:12.2px;text-align:center;white-space:nowrap">In Progress</div>
<div class="a" style="left:636.2px;top:362.5px;width:41.6px;height:11.4px;border-radius:6px;background:#62caf2;color:#fff;font-size:7.4px;font-weight:bold;line-height:12.2px;text-align:center;white-space:nowrap">REGULAR</div>
<div class="t" style="left:688px;top:363.22px;font-size:8.4px;color:#3a7bc0;">IFINANCE LENDING INVESTOR CORP.</div>
<div class="t" style="left:892.2px;top:363.22px;font-size:8.4px;color:#666;transform:translateX(-50%);">Honda Civic 2019 RS</div>
<div class="t" style="left:892.2px;top:375.27px;font-size:8.4px;color:#666;transform:translateX(-50%);"><svg width="9" height="7.5" viewBox="0 0 10 8.5" style="vertical-align:-0.5px"><path d="M1.3 8.4 A5 5 0 1 1 8.7 8.4 Z" fill="#888"/><path d="M5 7.6 L6.9 3.4" stroke="#fff" stroke-width="1.1"/><circle cx="5" cy="7.6" r="1.1" fill="#fff"/><circle cx="2.4" cy="5.6" r="0.75" fill="#fff"/><circle cx="3.3" cy="3.1" r="0.75" fill="#fff"/><circle cx="7.7" cy="5.6" r="0.75" fill="#fff"/></svg> 10.00 KM</div>
<div class="t" style="left:892.2px;top:387.32px;font-size:8.4px;color:#666;transform:translateX(-50%);">Automatic Diesel</div>
<div class="t" style="left:892.2px;top:399.37px;font-size:8.4px;color:#666;transform:translateX(-50%);">Plate No:ABC 123</div>
<svg class="a" style="left:176px;top:420.9px" width="9" height="7.2" viewBox="0 0 9 7.2"><path d="M0.2 1.3 Q0.2 0.3 1.2 0.3 H2.9 L3.9 1.3 H6.7 V2.5 H2.1 L0.2 6.2Z" fill="#2a6cb8"/><path d="M2.5 3 H9 L6.9 6.9 H0.4Z" fill="#2a6cb8"/></svg>
<svg class="a" style="left:193px;top:420.7px" width="8.5" height="8.2" viewBox="0 0 8.5 8.2"><path d="M2.1 3.4 V0.5 H5.1 L6.4 1.8 V3.4" stroke="#2a6cb8" stroke-width="0.85" fill="#fff"/><rect x="0.3" y="3.3" width="7.9" height="3" rx="1.1" fill="#2a6cb8"/><rect x="2.1" y="5.5" width="4.3" height="2.2" fill="#dde7f3" stroke="#2a6cb8" stroke-width="0.85"/></svg>
<div class="t" style="left:254.55px;top:420.82px;font-size:8.4px;color:#666;transform:translateX(-50%);">JO25-244</div>
<div class="t" style="left:366.05px;top:420.82px;font-size:8.4px;color:#666;transform:translateX(-50%);"></div>
<div class="t" style="left:465.5px;top:420.82px;font-size:8.4px;color:#666;transform:translateX(-50%);">0*:20</div>
<div class="t" style="left:536.5px;top:420.82px;font-size:8.4px;color:#666;transform:translateX(-50%);">0.00</div>
<div class="a" style="left:586.5px;top:420.1px;width:32px;height:11.4px;border-radius:6px;background:#0e8ff0;color:#fff;font-size:7.4px;font-weight:bold;line-height:12.2px;text-align:center;white-space:nowrap">Waiting</div>
<div class="a" style="left:636.2px;top:420.1px;width:41.6px;height:11.4px;border-radius:6px;background:#62caf2;color:#fff;font-size:7.4px;font-weight:bold;line-height:12.2px;text-align:center;white-space:nowrap">REGULAR</div>
<div class="t" style="left:688px;top:420.82px;font-size:8.4px;color:#3a7bc0;">MARK CARLO</div>
<svg class="a" style="left:176px;top:444.4px" width="9" height="7.2" viewBox="0 0 9 7.2"><path d="M0.2 1.3 Q0.2 0.3 1.2 0.3 H2.9 L3.9 1.3 H6.7 V2.5 H2.1 L0.2 6.2Z" fill="#2a6cb8"/><path d="M2.5 3 H9 L6.9 6.9 H0.4Z" fill="#2a6cb8"/></svg>
<svg class="a" style="left:193px;top:444.2px" width="8.5" height="8.2" viewBox="0 0 8.5 8.2"><path d="M2.1 3.4 V0.5 H5.1 L6.4 1.8 V3.4" stroke="#2a6cb8" stroke-width="0.85" fill="#fff"/><rect x="0.3" y="3.3" width="7.9" height="3" rx="1.1" fill="#2a6cb8"/><rect x="2.1" y="5.5" width="4.3" height="2.2" fill="#dde7f3" stroke="#2a6cb8" stroke-width="0.85"/></svg>
<div class="t" style="left:254.55px;top:444.32px;font-size:8.4px;color:#666;transform:translateX(-50%);">JO25-247</div>
<div class="t" style="left:366.05px;top:444.32px;font-size:8.4px;color:#666;transform:translateX(-50%);">asdf</div>
<div class="t" style="left:465.5px;top:444.32px;font-size:8.4px;color:#666;transform:translateX(-50%);">0*:19</div>
<div class="t" style="left:536.5px;top:444.32px;font-size:8.4px;color:#666;transform:translateX(-50%);">0.00</div>
<div class="a" style="left:586.5px;top:443.6px;width:32px;height:11.4px;border-radius:6px;background:#0e8ff0;color:#fff;font-size:7.4px;font-weight:bold;line-height:12.2px;text-align:center;white-space:nowrap">Waiting</div>
<div class="a" style="left:636.2px;top:443.6px;width:41.6px;height:11.4px;border-radius:6px;background:#62caf2;color:#fff;font-size:7.4px;font-weight:bold;line-height:12.2px;text-align:center;white-space:nowrap">REGULAR</div>
<div class="t" style="left:688px;top:444.32px;font-size:8.4px;color:#3a7bc0;">JELO PASIOLAN</div>
<div class="t" style="left:892.2px;top:444.32px;font-size:8.4px;color:#666;transform:translateX(-50%);">Audi Sedan</div>
<div class="t" style="left:892.2px;top:456.37px;font-size:8.4px;color:#666;transform:translateX(-50%);"><svg width="9" height="7.5" viewBox="0 0 10 8.5" style="vertical-align:-0.5px"><path d="M1.3 8.4 A5 5 0 1 1 8.7 8.4 Z" fill="#888"/><path d="M5 7.6 L6.9 3.4" stroke="#fff" stroke-width="1.1"/><circle cx="5" cy="7.6" r="1.1" fill="#fff"/><circle cx="2.4" cy="5.6" r="0.75" fill="#fff"/><circle cx="3.3" cy="3.1" r="0.75" fill="#fff"/><circle cx="7.7" cy="5.6" r="0.75" fill="#fff"/></svg> 1212.00 KM</div>
<div class="t" style="left:892.2px;top:468.42px;font-size:8.4px;color:#666;transform:translateX(-50%);">CVT Diesel</div>
<div class="t" style="left:892.2px;top:480.47px;font-size:8.4px;color:#666;transform:translateX(-50%);">Plate No:12</div>
<svg class="a" style="left:176px;top:502.4px" width="9" height="7.2" viewBox="0 0 9 7.2"><path d="M0.2 1.3 Q0.2 0.3 1.2 0.3 H2.9 L3.9 1.3 H6.7 V2.5 H2.1 L0.2 6.2Z" fill="#2a6cb8"/><path d="M2.5 3 H9 L6.9 6.9 H0.4Z" fill="#2a6cb8"/></svg>
<svg class="a" style="left:193px;top:502.2px" width="8.5" height="8.2" viewBox="0 0 8.5 8.2"><path d="M2.1 3.4 V0.5 H5.1 L6.4 1.8 V3.4" stroke="#2a6cb8" stroke-width="0.85" fill="#fff"/><rect x="0.3" y="3.3" width="7.9" height="3" rx="1.1" fill="#2a6cb8"/><rect x="2.1" y="5.5" width="4.3" height="2.2" fill="#dde7f3" stroke="#2a6cb8" stroke-width="0.85"/></svg>
<div class="t" style="left:254.55px;top:502.32px;font-size:8.4px;color:#666;transform:translateX(-50%);">JO25-248</div>
<div class="t" style="left:366.05px;top:502.32px;font-size:8.4px;color:#666;transform:translateX(-50%);">asdf</div>
<div class="t" style="left:465.5px;top:502.32px;font-size:8.4px;color:#666;transform:translateX(-50%);">0*:19</div>
<div class="t" style="left:536.5px;top:502.32px;font-size:8.4px;color:#666;transform:translateX(-50%);">0.00</div>
<div class="a" style="left:586.5px;top:501.6px;width:32px;height:11.4px;border-radius:6px;background:#0e8ff0;color:#fff;font-size:7.4px;font-weight:bold;line-height:12.2px;text-align:center;white-space:nowrap">Waiting</div>
<div class="a" style="left:636.2px;top:501.6px;width:41.6px;height:11.4px;border-radius:6px;background:#62caf2;color:#fff;font-size:7.4px;font-weight:bold;line-height:12.2px;text-align:center;white-space:nowrap">REGULAR</div>
<div class="t" style="left:688px;top:502.32px;font-size:8.4px;color:#3a7bc0;">JELO PASIOLAN</div>
<div class="t" style="left:892.2px;top:502.32px;font-size:8.4px;color:#666;transform:translateX(-50%);">Honda Brio 2012</div>
<div class="t" style="left:892.2px;top:514.37px;font-size:8.4px;color:#666;transform:translateX(-50%);"><svg width="9" height="7.5" viewBox="0 0 10 8.5" style="vertical-align:-0.5px"><path d="M1.3 8.4 A5 5 0 1 1 8.7 8.4 Z" fill="#888"/><path d="M5 7.6 L6.9 3.4" stroke="#fff" stroke-width="1.1"/><circle cx="5" cy="7.6" r="1.1" fill="#fff"/><circle cx="2.4" cy="5.6" r="0.75" fill="#fff"/><circle cx="3.3" cy="3.1" r="0.75" fill="#fff"/><circle cx="7.7" cy="5.6" r="0.75" fill="#fff"/></svg> 80.00 KM</div>
<div class="t" style="left:892.2px;top:526.42px;font-size:8.4px;color:#666;transform:translateX(-50%);">Automatic Gas</div>
<div class="t" style="left:963.9px;top:502.32px;font-size:8.4px;color:#666;transform:translateX(-50%);">LOY</div>
<div class="a" style="left:937.3px;top:207.3px;width:51.8px;height:20.6px;background:#dcdcdc;border:1px solid #cccccc;border-radius:2px"></div>
<div class="t" style="left:946.2px;top:213.6px;font-size:8.3px;color:#444">Display</div>
<svg class="a" style="left:976.8px;top:217.6px" width="4" height="2.5" viewBox="0 0 4 2.5"><path d="M0 0 H4 L2 2.2Z" fill="#444"/></svg>
<div class="a" style="left:882.6px;top:228.6px;width:107px;height:227px;background:#fff;border-radius:3px;box-shadow:0 1px 5px rgba(0,0,0,.17)"></div>
<div class="a" style="left:892.8px;top:235.8px;width:10.4px;height:10.3px;background:#1a9af5;border-radius:2px"></div>
<svg class="a" style="left:894.6px;top:238.2px" width="7" height="6" viewBox="0 0 7 6"><path d="M1 3.2 L2.8 4.9 L6.1 1.4" stroke="#fff" stroke-width="1.7" fill="none"/></svg>
<div class="t" style="left:908px;top:237.9px;font-size:8.35px;color:#444">Action</div>
<div class="a" style="left:892.8px;top:257.9px;width:10.4px;height:10.3px;background:#1a9af5;border-radius:2px"></div>
<svg class="a" style="left:894.6px;top:260.3px" width="7" height="6" viewBox="0 0 7 6"><path d="M1 3.2 L2.8 4.9 L6.1 1.4" stroke="#fff" stroke-width="1.7" fill="none"/></svg>
<div class="t" style="left:908px;top:260.1px;font-size:8.35px;color:#444">Job Order Number</div>
<div class="a" style="left:892.8px;top:280.1px;width:10.4px;height:10.3px;background:#1a9af5;border-radius:2px"></div>
<svg class="a" style="left:894.6px;top:282.5px" width="7" height="6" viewBox="0 0 7 6"><path d="M1 3.2 L2.8 4.9 L6.1 1.4" stroke="#fff" stroke-width="1.7" fill="none"/></svg>
<div class="t" style="left:908px;top:282.2px;font-size:8.35px;color:#444">Job Description</div>
<div class="a" style="left:892.8px;top:302.2px;width:10.4px;height:10.3px;background:#1a9af5;border-radius:2px"></div>
<svg class="a" style="left:894.6px;top:304.6px" width="7" height="6" viewBox="0 0 7 6"><path d="M1 3.2 L2.8 4.9 L6.1 1.4" stroke="#fff" stroke-width="1.7" fill="none"/></svg>
<div class="t" style="left:908px;top:304.4px;font-size:8.35px;color:#444">Waiting Time</div>
<div class="a" style="left:892.8px;top:324.4px;width:10.4px;height:10.3px;background:#1a9af5;border-radius:2px"></div>
<svg class="a" style="left:894.6px;top:326.8px" width="7" height="6" viewBox="0 0 7 6"><path d="M1 3.2 L2.8 4.9 L6.1 1.4" stroke="#fff" stroke-width="1.7" fill="none"/></svg>
<div class="t" style="left:908px;top:326.5px;font-size:8.35px;color:#444">Estimated Cost</div>
<div class="a" style="left:892.8px;top:346.6px;width:10.4px;height:10.3px;background:#1a9af5;border-radius:2px"></div>
<svg class="a" style="left:894.6px;top:348.9px" width="7" height="6" viewBox="0 0 7 6"><path d="M1 3.2 L2.8 4.9 L6.1 1.4" stroke="#fff" stroke-width="1.7" fill="none"/></svg>
<div class="t" style="left:908px;top:348.7px;font-size:8.35px;color:#444">Status</div>
<div class="a" style="left:892.8px;top:368.7px;width:10.4px;height:10.3px;background:#1a9af5;border-radius:2px"></div>
<svg class="a" style="left:894.6px;top:371.1px" width="7" height="6" viewBox="0 0 7 6"><path d="M1 3.2 L2.8 4.9 L6.1 1.4" stroke="#fff" stroke-width="1.7" fill="none"/></svg>
<div class="t" style="left:908px;top:370.8px;font-size:8.35px;color:#444">Type</div>
<div class="a" style="left:892.8px;top:390.9px;width:10.4px;height:10.3px;background:#1a9af5;border-radius:2px"></div>
<svg class="a" style="left:894.6px;top:393.2px" width="7" height="6" viewBox="0 0 7 6"><path d="M1 3.2 L2.8 4.9 L6.1 1.4" stroke="#fff" stroke-width="1.7" fill="none"/></svg>
<div class="t" style="left:908px;top:393.0px;font-size:8.35px;color:#444">Customer Name</div>
<div class="a" style="left:892.8px;top:413.0px;width:10.4px;height:10.3px;background:#1a9af5;border-radius:2px"></div>
<svg class="a" style="left:894.6px;top:415.4px" width="7" height="6" viewBox="0 0 7 6"><path d="M1 3.2 L2.8 4.9 L6.1 1.4" stroke="#fff" stroke-width="1.7" fill="none"/></svg>
<div class="t" style="left:908px;top:415.1px;font-size:8.35px;color:#444">Car</div>
<div class="a" style="left:892.8px;top:435.1px;width:10.4px;height:10.3px;background:#1a9af5;border-radius:2px"></div>
<svg class="a" style="left:894.6px;top:437.5px" width="7" height="6" viewBox="0 0 7 6"><path d="M1 3.2 L2.8 4.9 L6.1 1.4" stroke="#fff" stroke-width="1.7" fill="none"/></svg>
<div class="t" style="left:908px;top:437.2px;font-size:8.35px;color:#444">Mechanic</div>
<div class="a" style="left:877.7px;top:148.5px;width:128.4px;height:326px;border:3.2px solid #e3161b"></div>
<svg class="a" style="left:925px;top:190px" width="78" height="53" viewBox="0 0 78 53"><ellipse cx="39" cy="26.4" rx="35.1" ry="22.6" stroke="#3a0db2" stroke-width="3" fill="none"/></svg>
<div class="a" style="left:1010px;top:60px;width:14px;height:478px;background:#f7f7f7"></div><div class="a" style="left:1010px;top:60px;width:11.5px;height:478px;background:#fdfdfd;border-top-right-radius:7px;border-bottom-right-radius:7px;border-right:0.6px solid #ececec;border-bottom:1px solid #dcdcdc"></div>
<svg class="a" style="left:1013px;top:64px" width="7" height="5" viewBox="0 0 7 5"><path d="M0 5 H7 L3.5 0Z" fill="#8a8a8a"/></svg>
<div class="a" style="left:1012.9px;top:73.5px;width:6.5px;height:271px;background:#8a8a8a;border-radius:3.3px"></div>
<svg class="a" style="left:1013px;top:527.8px" width="7" height="5" viewBox="0 0 7 5"><path d="M0 0 H7 L3.5 5Z" fill="#8a8a8a"/></svg>
<div class="a" style="left:0;top:536.5px;width:1016px;height:1.5px;background:#d0d0d0"></div>
<div class="a" style="left:0;top:60px;width:3px;height:478px;background:#f5f5f5;border-right:0.6px solid #e6e6e6"></div>
<div class="a" style="left:2px;top:529px;width:10px;height:9px;background:#f3f3f3"></div><div class="a" style="left:2.6px;top:526px;width:12px;height:11px;background:#fff;border-left:0.6px solid #e6e6e6;border-bottom:1px solid #dedede;border-bottom-left-radius:6px"></div>
</body></html>
